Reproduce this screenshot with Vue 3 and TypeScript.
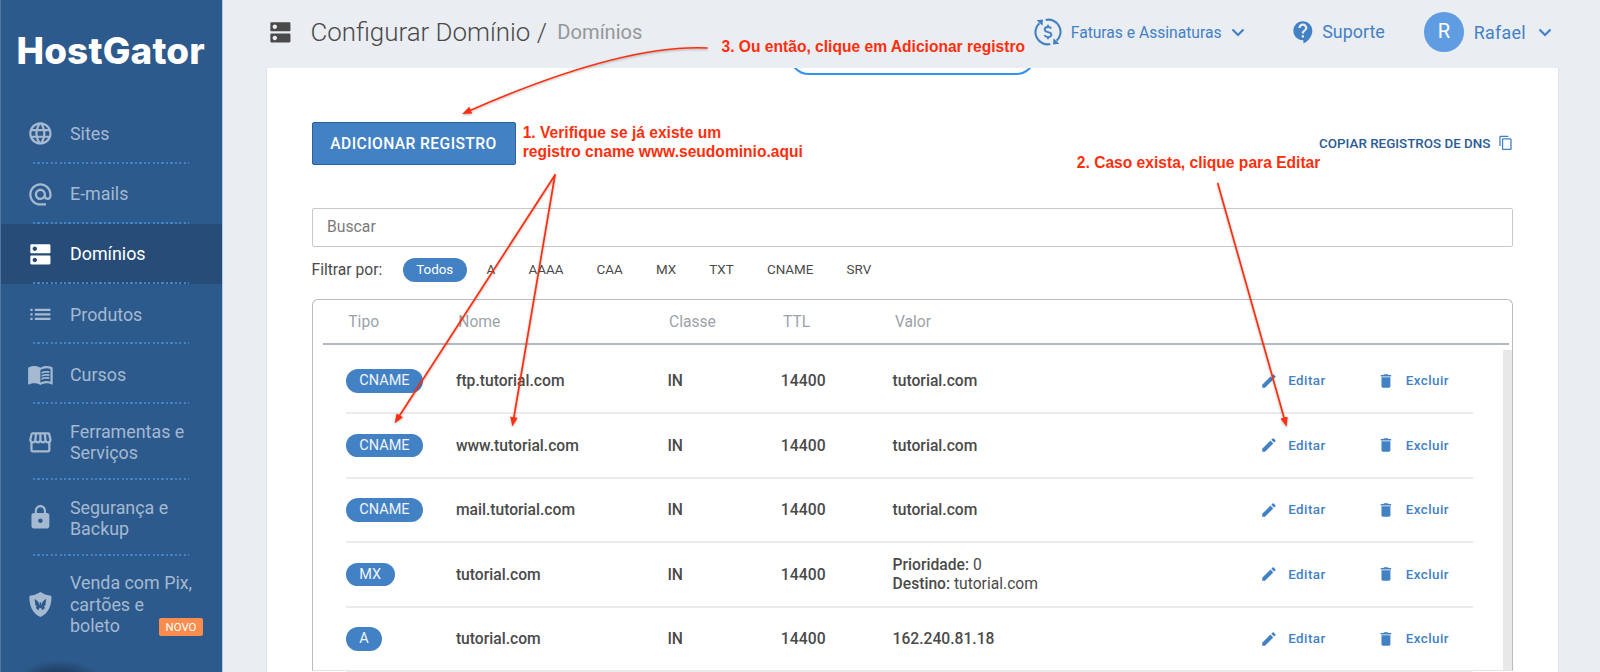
<script setup lang="ts">
interface NavItem {
  label: string
  icon: string
  size?: 'double' | 'triple'
  active?: boolean
  badge?: string
}

interface DnsRecord {
  type: string
  name: string
  value?: string
  priority?: number
  target?: string
}

const nav: NavItem[] = [
  { label: 'Sites', icon: 'M11.99 2C6.47 2 2 6.48 2 12s4.47 10 9.99 10C17.52 22 22 17.52 22 12S17.52 2 11.99 2zm6.93 6h-2.95c-.32-1.25-.78-2.45-1.38-3.56 1.84.63 3.37 1.91 4.33 3.56zM12 4.04c.83 1.2 1.48 2.53 1.91 3.96h-3.82c.43-1.43 1.08-2.76 1.91-3.96zM4.26 14C4.1 13.36 4 12.69 4 12s.1-1.36.26-2h3.38c-.08.66-.14 1.32-.14 2s.06 1.34.14 2H4.26zm.82 2h2.95c.32 1.25.78 2.45 1.38 3.56-1.84-.63-3.37-1.9-4.33-3.56zm2.95-8H5.08c.96-1.66 2.49-2.93 4.33-3.56C8.81 5.55 8.35 6.75 8.03 8zM12 19.96c-.83-1.2-1.48-2.53-1.91-3.96h3.82c-.43 1.43-1.08 2.76-1.91 3.96zM14.34 14H9.66c-.09-.66-.16-1.32-.16-2s.07-1.35.16-2h4.68c.09.65.16 1.32.16 2s-.07 1.34-.16 2zm.25 5.56c.6-1.11 1.06-2.31 1.38-3.56h2.95c-.96 1.65-2.49 2.93-4.33 3.56zM16.36 14c.08-.66.14-1.32.14-2s-.06-1.34-.14-2h3.38c.16.64.26 1.31.26 2s-.1 1.36-.26 2h-3.38z' },
  { label: 'E-mails', icon: 'M12 2C6.48 2 2 6.48 2 12s4.48 10 10 10h5v-2h-5c-4.34 0-8-3.66-8-8s3.66-8 8-8 8 3.66 8 8v1.43c0 .79-.71 1.57-1.5 1.57s-1.5-.78-1.5-1.57V12c0-2.76-2.24-5-5-5s-5 2.24-5 5 2.24 5 5 5c1.38 0 2.64-.56 3.54-1.47.65.89 1.77 1.47 2.96 1.47 1.97 0 3.5-1.6 3.5-3.57V12c0-5.52-4.48-10-10-10zm0 13c-1.66 0-3-1.34-3-3s1.34-3 3-3 3 1.34 3 3-1.34 3-3 3z' },
  { label: 'Domínios', active: true, icon: 'M20 13H4c-.55 0-1 .45-1 1v6c0 .55.45 1 1 1h16c.55 0 1-.45 1-1v-6c0-.55-.45-1-1-1zM7 19c-1.1 0-2-.9-2-2s.9-2 2-2 2 .9 2 2-.9 2-2 2zM20 3H4c-.55 0-1 .45-1 1v6c0 .55.45 1 1 1h16c.55 0 1-.45 1-1V4c0-.55-.45-1-1-1zM7 9c-1.1 0-2-.9-2-2s.9-2 2-2 2 .9 2 2-.9 2-2 2z' },
  { label: 'Produtos', icon: 'M3 13h2v-2H3v2zm0 4h2v-2H3v2zm0-8h2V7H3v2zm4 4h14v-2H7v2zm0 4h14v-2H7v2zM7 7v2h14V7H7z' },
  { label: 'Cursos', icon: 'M21 5c-1.11-.35-2.33-.5-3.5-.5-1.95 0-4.05.4-5.5 1.5-1.45-1.1-3.55-1.5-5.5-1.5S2.45 4.9 1 6v14.65c0 .25.25.5.5.5.1 0 .15-.05.25-.05C3.1 20.45 5.05 20 6.5 20c1.95 0 4.05.4 5.5 1.5 1.35-.85 3.8-1.5 5.5-1.5 1.65 0 3.35.3 4.75 1.05.1.05.15.05.25.05.25 0 .5-.25.5-.5V6c-.6-.45-1.25-.75-2-1zm0 13.5c-1.1-.35-2.3-.5-3.5-.5-1.7 0-4.15.65-5.5 1.5V8c1.35-.85 3.8-1.5 5.5-1.5 1.2 0 2.4.15 3.5.5v11.5zM17.5 10.5c.88 0 1.73.09 2.5.26V9.24c-.79-.15-1.64-.24-2.5-.24-1.7 0-3.24.29-4.5.83v1.66c1.13-.64 2.7-.99 4.5-.99zM13 12.49v1.66c1.13-.64 2.7-.99 4.5-.99.88 0 1.73.09 2.5.26V11.9c-.79-.15-1.64-.24-2.5-.24-1.7 0-3.24.3-4.5.83zM17.5 14.33c-1.7 0-3.24.29-4.5.83v1.66c1.13-.64 2.7-.99 4.5-.99.88 0 1.73.09 2.5.26v-1.52c-.79-.16-1.64-.24-2.5-.24z' },
  { label: 'Ferramentas e Serviços', size: 'double', icon: 'M21.9 8.89l-1.05-4.37c-.22-.9-1-1.52-1.91-1.52H5.05c-.9 0-1.69.63-1.9 1.52L2.1 8.89c-.24 1.02-.02 2.06.62 2.88.08.11.19.19.28.29V19c0 1.1.9 2 2 2h14c1.1 0 2-.9 2-2v-6.94c.09-.09.2-.18.28-.28.64-.82.87-1.87.62-2.89zm-2.99-3.9l1.05 4.37c.1.42.01.84-.25 1.17-.14.18-.44.47-.94.47-.61 0-1.14-.49-1.21-1.14L16.98 5l1.93-.01zM13 5h1.96l.54 4.52c.05.39-.07.78-.33 1.07-.22.26-.54.41-.95.41-.67 0-1.22-.59-1.22-1.31V5zM8.49 9.52L9.04 5H11v4.69c0 .72-.55 1.31-1.29 1.31-.34 0-.65-.15-.89-.41-.25-.29-.37-.68-.33-1.07zm-4.45-.16L5.05 5h1.97l-.58 4.86c-.08.65-.6 1.14-1.21 1.14-.49 0-.8-.29-.93-.47-.27-.32-.36-.75-.26-1.17zM5 19v-6.03c.08.01.15.03.23.03.87 0 1.66-.36 2.24-.95.6.6 1.4.95 2.31.95.87 0 1.65-.36 2.23-.93.59.57 1.39.93 2.29.93.84 0 1.64-.35 2.24-.95.58.59 1.37.95 2.24.95.08 0 .15-.02.23-.03V19H5z' },
  { label: 'Segurança e Backup', size: 'double', icon: 'M18 8h-1V6c0-2.76-2.24-5-5-5S7 3.24 7 6v2H6c-1.1 0-2 .9-2 2v10c0 1.1.9 2 2 2h12c1.1 0 2-.9 2-2V10c0-1.1-.9-2-2-2zm-6 9c-1.1 0-2-.9-2-2s.9-2 2-2 2 .9 2 2-.9 2-2 2zm3.1-9H8.9V6c0-1.71 1.39-3.1 3.1-3.1 1.71 0 3.1 1.39 3.1 3.1v2z' },
  { label: 'Venda com Pix, cartões e boleto', size: 'triple', badge: 'NOVO', icon: 'M12 1C9.5 2.8 6.2 3.9 2.2 4.2 1.6 12.5 5 20.5 12 23.2 19 20.5 22.4 12.5 21.8 4.2 17.8 3.9 14.5 2.8 12 1zM6.8 7.2c2.4 1 3.9 2.9 4.6 6V10h1.2v3.2c.7-3.1 2.2-5 4.6-6l-.7 5.6-1.3.9 1 1.5-2.5 2-1.1-2.4-.6.9-.6-.9-1.1 2.4-2.5-2 1-1.5-1.3-.9z' },
]

const filters = ['Todos', 'A', 'AAAA', 'CAA', 'MX', 'TXT', 'CNAME', 'SRV']
const columns = ['Tipo', 'Nome', 'Classe', 'TTL', 'Valor']

const records: DnsRecord[] = [
  { type: 'CNAME', name: 'ftp.tutorial.com', value: 'tutorial.com' },
  { type: 'CNAME', name: 'www.tutorial.com', value: 'tutorial.com' },
  { type: 'CNAME', name: 'mail.tutorial.com', value: 'tutorial.com' },
  { type: 'MX', name: 'tutorial.com', priority: 0, target: 'tutorial.com' },
  { type: 'A', name: 'tutorial.com', value: '162.240.81.18' },
]
</script>

<template>
  <div class="app">
    <aside class="sidebar">
      <div class="logo">HostGator</div>
      <nav>
        <a v-for="item in nav" :key="item.label" class="nav-item" :class="[item.size, { active: item.active }]">
          <svg class="nav-icon" viewBox="0 0 24 24"><path fill-rule="evenodd" :d="item.icon" /></svg>
          <span class="nav-label">{{ item.label }}</span>
          <span v-if="item.badge" class="badge">{{ item.badge }}</span>
        </a>
      </nav>
      <div class="glow"></div>
    </aside>

    <div class="main">
      <header class="topbar">
        <svg class="title-icon" viewBox="0 0 24 24"><path :d="nav[2].icon" /></svg>
        <h1>Configurar Domínio /</h1>
        <span class="crumb">Domínios</span>
        <div class="user-nav">
          <a class="billing">
            <svg class="cycle" viewBox="0 0 28 28">
              <g fill="none" stroke="currentColor" stroke-width="2.1">
                <path d="M11.7 1.9A12.2 12.2 0 0 1 22.6 22.8" />
                <path d="M16.3 26.1A12.2 12.2 0 0 1 5.4 5.2" />
                <path d="M17.3 10.5C16.5 9.3 15.5 9 14 9c-2 0-3.3 1-3.3 2.5 0 3.7 6.7 1.5 6.7 5.1 0 1.5-1.4 2.5-3.4 2.5-1.7 0-2.9-.6-3.5-1.9M14 6.7V9M14 19v2.3" stroke-width="1.9" />
              </g>
              <path d="M2.6 2.2 9 1.5 8.5 7.8zM25.4 25.8 19 26.5l.5-6.3z" />
            </svg>
            <span>Faturas e Assinaturas</span>
            <svg class="chevron" viewBox="0 0 14 9"><path d="M1.5 1.5 7 7l5.500-5.500" /></svg>
          </a>
          <a class="support">
            <svg class="help" viewBox="0 0 24 24"><path d="M11.5 2C6.81 2 3 5.81 3 10.5S6.81 19 11.5 19h.5v3c4.86-2.34 8-7 8-11.5C20 5.81 16.19 2 11.5 2zm1 14.5h-2v-2h2v2zm0-3.5h-2c0-3.25 3-3 3-5 0-1.1-.9-2-2-2s-2 .9-2 2h-2c0-2.21 1.79-4 4-4s4 1.79 4 4c0 2.5-3 2.75-3 5z" /></svg>
            <span>Suporte</span>
          </a>
          <a class="account">
            <span class="avatar">R</span>
            <span class="user-name">Rafael</span>
            <svg class="chevron" viewBox="0 0 14 9"><path d="M1.5 1.5 7 7l5.500-5.500" /></svg>
          </a>
        </div>
      </header>

      <main class="card">
        <div class="pill-outline"></div>
        <div class="actions">
          <button class="add">ADICIONAR REGISTRO</button>
          <a class="copy">
            <span>COPIAR REGISTROS DE DNS</span>
            <svg viewBox="0 0 24 24"><path d="M16 1H4c-1.1 0-2 .9-2 2v14h2V3h12V1zm3 4H8c-1.1 0-2 .9-2 2v14c0 1.1.9 2 2 2h11c1.1 0 2-.9 2-2V7c0-1.1-.9-2-2-2zm0 16H8V7h11v14z" /></svg>
          </a>
        </div>
        <div class="search">Buscar</div>
        <div class="filters">
          <span class="filter-label">Filtrar por:</span>
          <span v-for="(f, i) in filters" :key="f" class="chip" :class="{ selected: i === 0 }">{{ f }}</span>
        </div>

        <section class="table">
          <div class="grid head">
            <span v-for="c in columns" :key="c">{{ c }}</span>
          </div>
          <div class="scroll">
            <div class="rows">
              <div v-for="r in records" :key="r.type + r.name" class="grid row">
                <span><span class="type">{{ r.type }}</span></span>
                <span>{{ r.name }}</span>
                <span class="class">IN</span>
                <span class="ttl">14400</span>
                <span v-if="r.value">{{ r.value }}</span>
                <span v-else class="mx">
                  <span>Prioridade: <i>{{ r.priority }}</i></span>
                  <span>Destino: <i>{{ r.target }}</i></span>
                </span>
                <a class="action">
                  <svg viewBox="0 0 24 24"><path d="M3 17.25V21h3.75L17.81 9.94l-3.75-3.75L3 17.25zM20.71 7.04c.39-.39.39-1.02 0-1.41l-2.34-2.34c-.39-.39-1.02-.39-1.41 0l-1.83 1.83 3.75 3.75 1.83-1.83z" /></svg>
                  Editar
                </a>
                <a class="action">
                  <svg viewBox="0 0 24 24"><path d="M6 19c0 1.1.9 2 2 2h8c1.1 0 2-.9 2-2V7H6v12zM19 4h-3.5l-1-1h-5l-1 1H5v2h14V4z" /></svg>
                  Excluir
                </a>
              </div>
            </div>
            <div class="track"></div>
          </div>
        </section>
      </main>
    </div>

    <div class="notes">
      <svg class="arrows" viewBox="0 0 1600 672">
        <defs>
          <marker id="head" viewBox="0 0 10 8" refX="1" refY="4" markerWidth="9.5" markerHeight="8" markerUnits="userSpaceOnUse" orient="auto">
            <path d="M0 0 10 4 0 8z" fill="#ff2f0e" />
          </marker>
        </defs>
        <g fill="none" stroke="#ff2f0e" stroke-width="1.7" stroke-linecap="round">
          <path d="M707 48Q622 44 470 110.500" marker-end="url(#head)" />
          <path d="M555 175 399.300 416" marker-end="url(#head)" />
          <path d="M555 175 513.800 418" marker-end="url(#head)" />
          <path d="M1217.800 183.500 1284.300 418.500" marker-end="url(#head)" />
        </g>
      </svg>
      <p class="note one">1. Verifique se já existe um<br />registro cname www.seudominio.aqui</p>
      <p class="note two">2. Caso exista, clique para Editar</p>
      <p class="note three">3. Ou então, clique em Adicionar registro</p>
    </div>
  </div>
</template>

<style>
body {
  background: #eaedf2;
}
</style>

<style scoped>
* {
  box-sizing: border-box;
}

.app {
  position: relative;
  display: flex;
  width: 1600px;
  height: 672px;
  overflow: hidden;
  background: #eaedf2;
  font-family: Roboto, "Liberation Sans", sans-serif;
  color: #4a4a4a;
}

svg {
  display: block;
  flex: none;
  fill: currentColor;
}

.sidebar {
  position: relative;
  flex: none;
  width: 223px;
  border-left: 1px solid #54779f;
  border-right: 1px solid #b3cbe6;
  background: #2d5a8c;
  overflow: hidden;
}

.logo {
  height: 103.8px;
  padding: 28.5px 0 0 15.4px;
  font: 800 36.8px/44px Inter, "Liberation Sans", sans-serif;
  letter-spacing: 0.2px;
  color: #fff;
}

.nav-item {
  position: relative;
  display: flex;
  align-items: center;
  height: 60.1px;
  padding-left: 25.6px;
  color: #a5b9d1;
  font-size: 17.87px;
  line-height: 21.2px;
}

.nav-item::after {
  content: "";
  position: absolute;
  left: 32px;
  bottom: 0;
  width: 156px;
  height: 2px;
  background: repeating-linear-gradient(90deg, #4682c6 0 2.2px, transparent 2.2px 4.43px);
}

.nav-item:last-child::after {
  display: none;
}

.double {
  height: 75.7px;
}

.triple {
  height: 97px;
}

.active {
  background: #274c77;
  color: #fff;
}

.nav-icon {
  width: 26.8px;
  height: 26.8px;
}

.nav-label {
  width: 124px;
  margin-left: 16.6px;
}

.badge {
  position: absolute;
  left: 158px;
  bottom: 16.5px;
  width: 44px;
  height: 18px;
  border-radius: 2px;
  background: #fa8d4e;
  color: #fff;
  font-size: 11.45px;
  line-height: 18.5px;
  text-align: center;
}

.glow {
  position: absolute;
  left: 16px;
  bottom: -28px;
  width: 84px;
  height: 40px;
  border-radius: 50%;
  background: radial-gradient(closest-side, rgba(20, 39, 63, 0.9), rgba(20, 39, 63, 0));
}

.main {
  flex: 1;
  min-width: 0;
  display: flex;
  flex-direction: column;
}

.topbar {
  display: flex;
  align-items: center;
  flex: none;
  height: 68px;
  padding: 0 48.5px 4px 43.7px;
}

.title-icon {
  width: 26.8px;
  height: 26.8px;
  margin-left: 0.3px;
}

h1 {
  margin: 0 0 0 16.6px;
  font-size: 25.9px;
  font-weight: 300;
  line-height: 32px;
  white-space: nowrap;
}

.crumb {
  margin-left: 10.4px;
  font-size: 20.1px;
  color: #959799;
}

.user-nav,
.user-nav a {
  display: flex;
  align-items: center;
  color: #4381c5;
}

.user-nav {
  margin-left: auto;
}

.billing {
  font-size: 15.63px;
}

.cycle {
  width: 28px;
  height: 28px;
  margin-right: 8.5px;
}

.chevron {
  width: 14px;
  height: 9px;
  fill: none;
  stroke: currentColor;
  stroke-width: 2.2;
}

.billing .chevron {
  margin-left: 9.6px;
}

.support {
  margin-left: 45px;
  font-size: 17.87px;
}

.help {
  width: 26.8px;
  height: 26.8px;
  margin-right: 5.4px;
}

.account {
  margin-left: 39.5px;
  font-size: 17.87px;
}

.avatar {
  width: 39.5px;
  height: 39.5px;
  border-radius: 50%;
  background: #609ce1;
  color: #fff;
  font-size: 20.1px;
  line-height: 39.5px;
  text-align: center;
}

.user-name {
  margin-left: 10px;
  letter-spacing: 0.3px;
}

.account .chevron {
  margin-left: 11.5px;
}

.card {
  position: relative;
  flex: 1;
  min-height: 0;
  width: 1291px;
  margin-left: 44px;
  padding: 54px 45px 0 44.5px;
  overflow: hidden;
  background: #fff;
  outline: 1px solid #dfe2e6;
  clip-path: inset(0 -2px);
}

.pill-outline {
  position: absolute;
  left: 522px;
  top: -34px;
  width: 247px;
  height: 41px;
  border: 2px solid #3093ee;
  border-radius: 20px;
}

.actions {
  display: flex;
  align-items: center;
  justify-content: space-between;
}

.add {
  width: 204px;
  height: 42.5px;
  padding: 1px 0 0;
  border: 1px solid #2d5f9c;
  border-radius: 2px;
  background: #4381c5;
  color: #fff;
  font: 500 15.63px/38px Roboto, sans-serif;
  letter-spacing: 0.41px;
}

.copy {
  display: flex;
  align-items: center;
  margin-right: -1px;
  color: #2a5b95;
  font-size: 13.4px;
  font-weight: 500;
}

.copy svg {
  width: 15.6px;
  height: 15.6px;
  margin-left: 8px;
  fill: #4381c5;
}

.search {
  height: 39px;
  margin-top: 43px;
  padding-left: 14.5px;
  border: 1.5px solid #c9c9c9;
  border-radius: 2px;
  font-size: 15.75px;
  line-height: 35.6px;
  color: #7b7b7b;
}

.filters {
  display: flex;
  align-items: center;
  gap: 6.4px;
  height: 25px;
  margin-top: 11px;
}

.filter-label {
  width: 84.9px;
  font-size: 15.63px;
  line-height: 24px;
}

.chip {
  height: 24.5px;
  padding: 0 13.4px;
  border-radius: 13px;
  font-size: 13.42px;
  line-height: 24.5px;
}

.selected {
  background: #4381c5;
  color: #fff;
}

.table {
  display: flex;
  flex-direction: column;
  height: 372px;
  margin-top: 16.5px;
  border: 1.5px solid #b9bcbf;
  border-bottom: 1px solid #e4e4e4;
  border-radius: 6px 6px 0 0;
}

.grid {
  display: grid;
  grid-template-columns: 110px 210.7px 114.1px 111.9px 367.1px 117.5px 1fr;
  align-items: center;
}

.head {
  height: 44.7px;
  margin: 0 3px 0 10.5px;
  padding-left: 25.3px;
  border-bottom: 2px solid #b3babf;
  color: #9ba3a9;
  font-size: 15.63px;
}

.scroll {
  display: flex;
  justify-content: space-between;
  flex: 1;
  min-height: 0;
  padding-top: 5px;
}

.rows {
  width: 1127px;
  margin-left: 33.4px;
}

.row {
  height: 64.56px;
  border-bottom: 2px solid #ebebeb;
  font-size: 15.65px;
  font-weight: 500;
}

.row:first-child {
  height: 64.3px;
}

.type {
  display: inline-block;
  height: 23.5px;
  padding: 0 13.4px;
  border-radius: 12px;
  background: #4381c5;
  color: #f0f5fb;
  font-size: 14.5px;
  font-weight: 400;
  line-height: 23.5px;
  vertical-align: middle;
}

.class {
  padding-left: 0.8px;
}

.ttl {
  letter-spacing: 0.15px;
}

.mx {
  display: grid;
  line-height: 19px;
}

.mx i {
  font-style: normal;
  font-weight: 400;
}

.action {
  display: flex;
  align-items: center;
  gap: 10.6px;
  color: #4381c5;
  font-size: 13.4px;
  letter-spacing: 0.45px;
}

.action svg {
  width: 17.9px;
  height: 17.9px;
}

.track {
  width: 9px;
  background: #e8e8e8;
}

.notes {
  position: absolute;
  inset: 0;
  color: #ff2f0e;
  font: 700 15.6px/19px "Liberation Sans", Arial, sans-serif;
}

.arrows {
  width: 1600px;
  height: 672px;
  filter: drop-shadow(0 1.5px 1px rgba(0, 0, 0, 0.3));
}

.note {
  position: absolute;
  margin: 0;
  white-space: nowrap;
}

.one {
  left: 522.7px;
  top: 123px;
}

.two {
  left: 1076.8px;
  top: 153px;
}

.three {
  left: 721.5px;
  top: 37px;
}
</style>
